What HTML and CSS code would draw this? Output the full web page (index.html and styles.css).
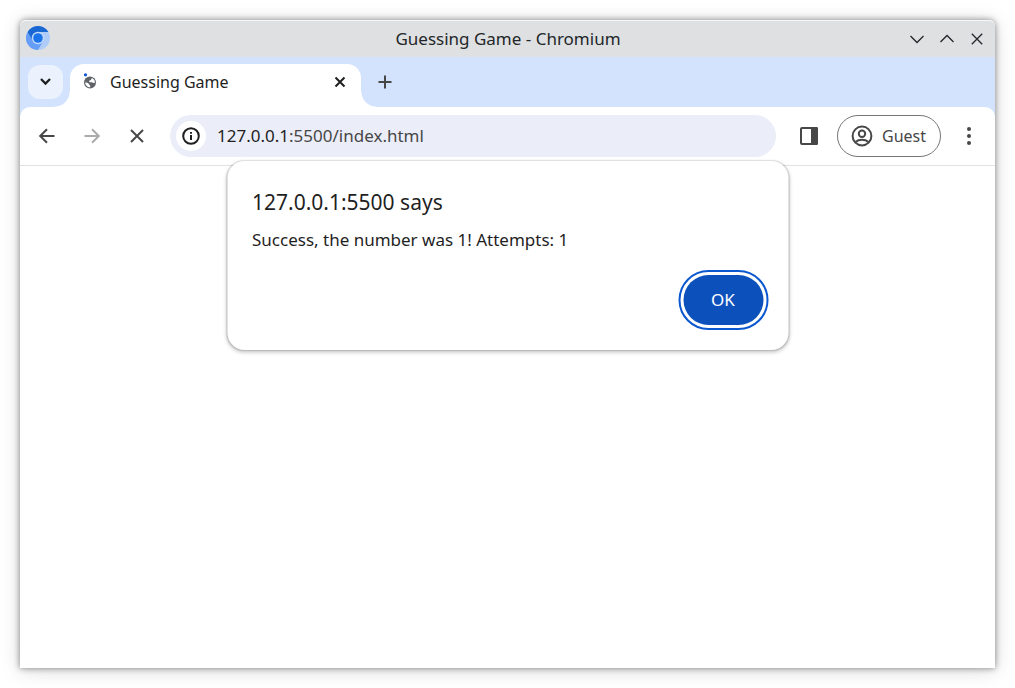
FILE: index.html
```html
<!DOCTYPE html>
<html lang="en">
<head>
<meta charset="utf-8">
<title>Guessing Game</title>
<link rel="stylesheet" href="styles.css">
</head>
<body>
<div class="window">
  <header class="titlebar">
    <svg class="logo" viewBox="0 0 24 24" aria-hidden="true">
      <circle cx="12" cy="12" r="12" fill="#afccf9"/>
      <path d="M1.6 6A12 12 0 0 0 12 24L17.2 15 12 12 6.8 15Z" fill="#669df6"/>
      <path d="M1.6 6A12 12 0 0 1 22.4 6H12L6.8 15Z" fill="#1967d2"/>
      <circle cx="12" cy="12" r="6.200" fill="#c3d9fb"/>
      <circle cx="12" cy="12" r="4.8" fill="#1a73e8"/>
    </svg>
    <span class="caption">Guessing Game - Chromium</span>
    <div class="controls">
      <button class="plain" aria-label="Minimize"><svg viewBox="0 0 16 16"><path d="M1.5 5 8 11.5 14.500 5"/></svg></button>
      <button class="plain" aria-label="Maximize"><svg viewBox="0 0 16 16"><path d="M1.500 11 8 4.500 14.500 11"/></svg></button>
      <button class="plain" aria-label="Close window"><svg viewBox="0 0 16 16"><path d="M2.800 2.800 13.200 13.200M13.200 2.800 2.800 13.200"/></svg></button>
    </div>
  </header>
  <div class="tabs">
    <button class="plain search" aria-label="Search tabs"><svg viewBox="0 0 16 16"><path d="M3 5 7.500 9.500 12 5"/></svg></button>
    <div class="tab">
      <svg class="favicon" viewBox="0 0 16 18" aria-hidden="true">
        <circle cx="3.500" cy="1.800" r="1.600" fill="#0b57d0"/>
        <circle cx="8" cy="9.500" r="6" fill="#5f6368"/>
        <path d="M3.300 9.300C4.500 9.500 6 9.800 6.600 10.800 7.200 12 8.500 12 8.300 14.300 5.500 14.300 3 12.200 3.300 9.300Z" fill="#fff"/>
        <path d="M9.800 4.900C11.800 5.700 12.900 7.300 12.900 9.400 12 10.800 11 9.600 9.800 9.300 8.400 9.200 6.800 9.400 7.200 8 7.600 7.200 8.800 7.300 9.200 6.500Z" fill="#fff"/>
      </svg>
      <span class="tab-title">Guessing Game</span>
      <button class="plain tab-close" aria-label="Close tab"><svg viewBox="0 0 16 16"><path d="M3.500 3.500 12.500 12.500M12.500 3.500 3.500 12.500"/></svg></button>
    </div>
    <button class="plain new-tab" aria-label="New tab"><svg viewBox="0 0 16 16"><path d="M8 1.500V14.500M1.500 8H14.500"/></svg></button>
  </div>
  <div class="toolbar">
    <nav class="nav">
      <button class="plain" aria-label="Back"><svg viewBox="0 0 20 20"><path d="M17.500 10H3.500M10 3.200 3.200 10 10 16.800"/></svg></button>
      <button class="plain faded" aria-label="Forward" disabled><svg viewBox="0 0 20 20"><path d="M2.500 10H16.500M10 3.200 16.800 10 10 16.800"/></svg></button>
      <button class="plain" aria-label="Stop"><svg viewBox="0 0 20 20"><path d="M4 4 16 16M16 4 4 16"/></svg></button>
    </nav>
    <div class="omnibox">
      <button class="plain site-info" aria-label="Site information"><svg viewBox="0 0 20 20"><circle cx="10" cy="10" r="7.800"/><path d="M10 9V14M10 6V7.800"/></svg></button>
      <div class="url"><span class="host">127.0.0.1</span>:5500/index.html</div>
    </div>
    <button class="plain panel" aria-label="Side panel"><svg viewBox="0 0 20 20"><rect x="2" y="2" width="16" height="16" rx="1"/><path class="solid" d="M12 1H18L19 2V18L18 19H12Z"/></svg></button>
    <button class="guest"><svg viewBox="0 0 22 22"><circle cx="11" cy="11" r="9.400"/><circle cx="11" cy="8.800" r="3.200"/><path d="M4.500 17C8 14 14 14 17.500 17"/></svg>Guest</button>
    <button class="plain menu" aria-label="Menu"><svg viewBox="0 0 20 20"><circle cx="10" cy="3" r="2"/><circle cx="10" cy="10" r="2"/><circle cx="10" cy="17" r="2"/></svg></button>
  </div>
  <main class="page"></main>
  <section class="dialog" role="alertdialog" aria-labelledby="origin" aria-describedby="message">
    <h1 class="origin" id="origin">127.0.0.1:5500 says</h1>
    <p class="message" id="message">Success, the number was 1! Attempts: 1</p>
    <button class="ok">OK</button>
  </section>
</div>
</body>
</html>
```
FILE: styles.css
```css
* { box-sizing: border-box; }

body {
  margin: 0;
  padding: 20px;
  min-height: 100vh;
  display: flex;
  background: #fff;
  color: #1f1f1f;
  font-family: "Noto Sans", sans-serif;
  font-size: 17px;
  line-height: 24px;
}

button {
  font: inherit;
  color: inherit;
  cursor: pointer;
}

.plain {
  display: grid;
  place-items: center;
  flex: none;
  padding: 0;
  border: 0;
  background: none;
}

svg {
  display: block;
  flex: none;
  fill: none;
  stroke: currentColor;
  stroke-width: 2;
}

.window {
  position: relative;
  flex: 1;
  display: flex;
  flex-direction: column;
  border-radius: 6px 6px 0 0;
  background: #fff;
  box-shadow: 0 0 6px rgba(0, 0, 0, 0.45), 0 2px 20px rgba(0, 0, 0, 0.16);
}

.titlebar {
  display: grid;
  grid-template-columns: 1fr auto 1fr;
  align-items: center;
  height: 37px;
  padding: 0 5px 0 6px;
  border-top: 1px solid #f6f7f7;
  border-radius: 6px 6px 0 0;
  background: #dee0e2;
  color: #232629;
}

.logo {
  width: 24px;
  height: 24px;
  margin-bottom: 2px;
  stroke: none;
}

.controls {
  display: flex;
  justify-content: flex-end;
  gap: 4px;
  margin-bottom: 1px;
}

.controls button {
  width: 26px;
  height: 26px;
}

.controls svg {
  width: 16px;
  height: 16px;
  stroke-width: 1.3;
}

.tabs {
  display: flex;
  height: 50px;
  padding: 7px 8px 0;
  background: #d3e3fd;
}

.search {
  width: 35px;
  height: 34px;
  margin: 1px 7px 0 0;
  border-radius: 12px;
  background: #ebf2fe;
}

.search svg {
  width: 16px;
  height: 16px;
  stroke-width: 2.3;
}

.tab {
  position: relative;
  display: flex;
  align-items: center;
  width: 291px;
  padding: 0 12px 7px;
  border-radius: 14px 14px 0 0;
  background: #fff;
}

.tab::before,
.tab::after {
  content: "";
  position: absolute;
  bottom: 0;
  width: 15px;
  height: 15px;
}

.tab::before {
  right: 100%;
  background: radial-gradient(circle at 0 0, transparent 14px, #fff 15px);
}

.tab::after {
  left: 100%;
  background: radial-gradient(circle at 100% 0, transparent 14px, #fff 15px);
}

.favicon {
  width: 16px;
  height: 18px;
  stroke: none;
}

.tab-title {
  flex: 1;
  padding-left: 12px;
  font-size: 16px;
}

.tab-close {
  width: 18px;
  height: 18px;
}

.tab-close svg,
.new-tab svg {
  width: 16px;
  height: 16px;
}

.new-tab {
  width: 36px;
  height: 36px;
  margin-left: 6px;
  color: #474747;
}

.toolbar {
  display: flex;
  align-items: center;
  height: 59px;
  padding: 0 14px 1px;
  border-bottom: 1px solid #e1e1e1;
  border-radius: 10px 10px 0 0;
  background: #fff;
  box-shadow: 0 -10px 0 0 #d3e3fd;
  color: #474747;
}

.tabs { z-index: 1; }

.nav {
  display: flex;
  gap: 19px;
}

.nav button {
  width: 26px;
  height: 26px;
}

.nav svg,
.panel svg,
.menu svg,
.site-info svg {
  width: 20px;
  height: 20px;
}

.faded { color: #ababab; }

.omnibox {
  flex: 1;
  display: flex;
  align-items: center;
  gap: 11px;
  height: 42px;
  margin: 0 20px;
  padding: 0 6px;
  border-radius: 21px;
  background: #ebeef8;
}

.site-info {
  width: 30px;
  height: 30px;
  border-radius: 50%;
  background: #fff;
  color: #1f1f1f;
}

.url { padding-top: 1px; }

.host { color: #1f1f1f; }

.panel {
  width: 26px;
  height: 26px;
  margin-right: 15px;
}

.solid {
  fill: currentColor;
  stroke: none;
}

.guest {
  display: flex;
  align-items: center;
  gap: 9px;
  height: 42px;
  padding: 0 14px 0 13px;
  border: 1px solid #747775;
  border-radius: 21px;
  background: none;
  font-size: 16px;
}

.guest svg {
  width: 22px;
  height: 22px;
}

.menu {
  width: 24px;
  height: 26px;
  margin-left: 16px;
}

.menu svg {
  fill: currentColor;
  stroke: none;
}

.page { flex: 1; }

.dialog {
  position: absolute;
  top: 141px;
  left: 50%;
  transform: translateX(-50%);
  display: flex;
  flex-direction: column;
  width: 561px;
  padding: 26px 25px;
  border-radius: 17px;
  background: #fff;
  box-shadow: 0 0 1px 1px rgba(0, 0, 0, 0.1), 0 2px 4px rgba(0, 0, 0, 0.26);
}

.origin {
  margin: 0;
  font-size: 21px;
  line-height: 30px;
  font-weight: 400;
}

.message {
  margin: 11px 0 23px;
}

.ok {
  align-self: flex-end;
  width: 80px;
  height: 50px;
  margin-bottom: -1px;
  border: 0;
  border-radius: 25px;
  outline: 2px solid #0b57d0;
  outline-offset: 3px;
  background: #0c50bb;
  color: #fff;
}
```
